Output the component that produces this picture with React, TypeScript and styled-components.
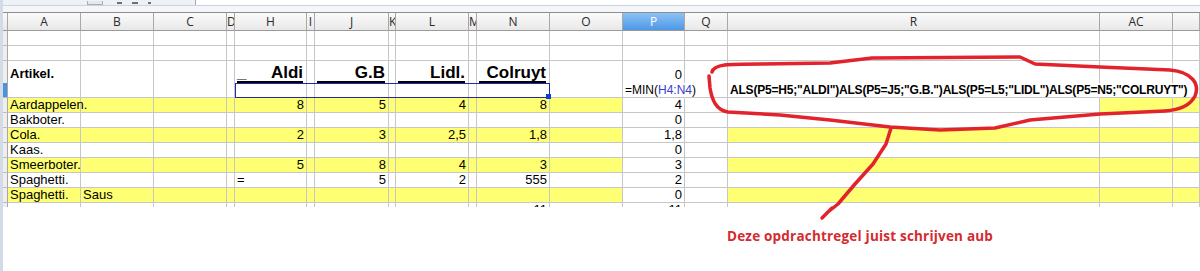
import React from 'react';
import styled, { createGlobalStyle } from 'styled-components';

const GlobalStyle = createGlobalStyle`
    html, body {
        margin: 0;
        padding: 0;
        background: #ffffff;
    }
    body {
        font-family: "Liberation Sans", Arial, sans-serif;
        color: #000;
    }
`;

const TEMPLATE = '5px 73px 73px 73px 8px 72px 8px 74px 7px 73px 8px 73px 73px 62px 43px 372px 73px 1fr';
const LETTERS = ['', 'A', 'B', 'C', 'D', 'H', 'I', 'J', 'K', 'L', 'M', 'N', 'O', 'P', 'Q', 'R', 'AC', ''];

const Page = styled.div`
    position: relative;
    display: flex;
    width: 1200px;
    height: 271px;
    overflow: hidden;
`;

const Rail = styled.div`
    width: 3px;
    background: #d3dbe7;
`;

const Main = styled.div`
    flex: 1;
    display: flex;
    flex-direction: column;
`;

const Toolbar = styled.div`
    height: 5px;
    display: flex;
    align-items: flex-end;
    background: #eef1f5;
`;

const ToolBox = styled.div`
    margin-left: 84px;
    width: 16px;
    height: 4px;
    box-sizing: border-box;
    border: 1px solid #a7afbb;
    border-top: none;
    background: #e6e8eb;
`;

const ToolMarks = styled.div`
    display: flex;
    gap: 10px;
    margin-left: 14px;
    width: 78px;
    height: 3px;
    align-items: flex-start;
`;

const Mark = styled.span<{ $w: number }>`
    width: ${p => p.$w}px;
    height: 2px;
    background: #6b717a;
`;

const InputField = styled.div`
    flex: 1;
    height: 5px;
    box-sizing: border-box;
    border-left: 1px solid #9ea7b4;
    background: #ffffff;
`;

const Band = styled.div`
    height: 7px;
    box-sizing: border-box;
    border-top: 1px solid #c9d3e1;
    background: #f4f6f9;
`;

const HeaderRow = styled.div`
    display: grid;
    grid-template-columns: ${TEMPLATE};
    height: 19px;
    box-sizing: border-box;
    border-top: 1px solid #8e8e8e;
`;

const ColHead = styled.div<{ $active?: boolean }>`
    box-sizing: border-box;
    height: 18px;
    overflow: hidden;
    border-right: 1px solid #a8a8a8;
    border-bottom: 1px solid #9a9a9a;
    background: ${p => p.$active
        ? 'linear-gradient(#8cc2f5, #4d98e6)'
        : 'linear-gradient(#fbfbfb, #e8e8e8)'};
    color: ${p => p.$active ? '#ffffff' : '#2b2b2b'};
    font-family: "Open Sans", "Noto Sans", sans-serif;
    font-size: 12px;
    line-height: 17px;
    text-align: center;
`;

const Row = styled.div<{ $h: number }>`
    position: relative;
    display: grid;
    grid-template-columns: ${TEMPLATE};
    height: ${p => p.$h}px;
`;

const RowHead = styled.div<{ $active?: boolean }>`
    box-sizing: border-box;
    border-right: 1px solid #a8a8a8;
    border-bottom: 1px solid #bdbdbd;
    background: ${p => p.$active ? '#4b93df' : '#eeeeee'};
`;

const Cell = styled.div<{ $fill?: boolean; $right?: boolean; $open?: boolean; $noLine?: boolean; $pad?: number }>`
    position: relative;
    z-index: ${p => p.$open ? 1 : 0};
    box-sizing: border-box;
    border-right: 1px solid ${p => p.$noLine ? 'transparent' : '#c6c6c6'};
    border-bottom: 1px solid #c6c6c6;
    background: ${p => p.$fill ? '#ffff73' : '#ffffff'};
    padding: ${p => p.$pad ?? 0}px 2px 0 2px;
    font-size: 13px;
    line-height: 14px;
    white-space: nowrap;
    text-align: ${p => p.$right ? 'right' : 'left'};
`;

const Bold = styled.span`
    font-weight: bold;
`;

const Heading = styled.span`
    display: flex;
    justify-content: space-between;
    font-size: 17px;
    font-weight: bold;
    line-height: 17px;
    border-bottom: 2px solid #000;
    margin: 0 1px 0 0;
`;

const MinFormula = styled.span`
    font-size: 12px;
`;

const Ref = styled.span`
    color: #3a3ad0;
`;

const IfFormula = styled.span`
    font-size: 12px;
    font-weight: bold;
    letter-spacing: -0.2px;
`;

const Selection = styled.div`
    position: absolute;
    left: 232px;
    top: 0;
    width: 315px;
    height: 15px;
    box-sizing: border-box;
    border: 1px solid #2228a8;
    pointer-events: none;
    z-index: 2;
`;

const FillHandle = styled.div`
    position: absolute;
    right: -2px;
    bottom: -2px;
    width: 5px;
    height: 5px;
    background: #0d3fd6;
`;

const Stub = styled.div`
    height: 4px;
    overflow: hidden;
`;

const Note = styled.div`
    margin-top: 21px;
    padding-left: 724px;
    font-family: "Open Sans", "Noto Sans", sans-serif;
    font-size: 13.5px;
    font-weight: bold;
    letter-spacing: 0.2px;
    line-height: 17px;
    color: #d42a30;
`;

const Ink = styled.svg`
    position: absolute;
    left: 0;
    top: 0;
    pointer-events: none;
    z-index: 5;
`;

type CellData = { v: React.ReactNode; right?: boolean; open?: boolean; noLine?: boolean; pad?: number };

type RowData = {
    h: number;
    yellow?: boolean;
    whiteR?: boolean;
    active?: boolean;
    cells: { [col: number]: CellData };
};

const rows: RowData[] = [
    { h: 15, cells: {} },
    { h: 15, cells: {} },
    {
        h: 22,
        cells: {
            1: { v: <Bold>Artikel.</Bold>, pad: 6 },
            5: { v: <Heading><span>_</span><span>Aldi</span></Heading>, pad: 3 },
            7: { v: <Heading><span /><span>G.B</span></Heading>, pad: 3 },
            9: { v: <Heading><span /><span>Lidl.</span></Heading>, pad: 3 },
            11: { v: <Heading><span /><span>Colruyt</span></Heading>, pad: 3 },
            13: { v: '0', right: true, pad: 7 },
        },
    },
    {
        h: 15,
        active: true,
        cells: {
            13: { v: <MinFormula>=MIN(<Ref>H4:N4</Ref>)</MinFormula>, open: true, noLine: true },
            15: { v: <IfFormula>ALS(P5=H5;"ALDI")ALS(P5=J5;"G.B.")ALS(P5=L5;"LIDL")ALS(P5=N5;"COLRUYT")</IfFormula>, open: true, noLine: true },
            16: { v: '', noLine: true },
        },
    },
    { h: 15, yellow: true, whiteR: true, cells: { 1: { v: 'Aardappelen.', open: true }, 5: { v: '8', right: true }, 7: { v: '5', right: true }, 9: { v: '4', right: true }, 11: { v: '8', right: true }, 13: { v: '4', right: true } } },
    { h: 15, cells: { 1: { v: 'Bakboter.' }, 13: { v: '0', right: true } } },
    { h: 15, yellow: true, cells: { 1: { v: 'Cola.' }, 5: { v: '2', right: true }, 7: { v: '3', right: true }, 9: { v: '2,5', right: true }, 11: { v: '1,8', right: true }, 13: { v: '1,8', right: true } } },
    { h: 15, cells: { 1: { v: 'Kaas.' }, 13: { v: '0', right: true } } },
    { h: 15, yellow: true, cells: { 1: { v: 'Smeerboter.' }, 5: { v: '5', right: true }, 7: { v: '8', right: true }, 9: { v: '4', right: true }, 11: { v: '3', right: true }, 13: { v: '3', right: true } } },
    { h: 15, cells: { 1: { v: 'Spaghetti.' }, 5: { v: '=' }, 7: { v: '5', right: true }, 9: { v: '2', right: true }, 11: { v: '555', right: true }, 13: { v: '2', right: true } } },
    { h: 15, yellow: true, cells: { 1: { v: 'Spaghetti.' }, 2: { v: 'Saus' }, 13: { v: '0', right: true } } },
];

const isYellow = (row: RowData, col: number) => {
    if (!row.yellow) return false;
    if (col === 13 || col === 14) return false;
    if (col === 15 && row.whiteR) return false;
    return true;
};

const SheetRow = ({ row, selected }: { row: RowData; selected?: boolean }) => (
    <Row $h={row.h}>
        <RowHead $active={row.active} />
        {LETTERS.slice(1).map((_, i) => {
            const col = i + 1;
            const c = row.cells[col];
            return (
                <Cell
                    key={col}
                    $fill={isYellow(row, col)}
                    $right={c?.right}
                    $open={c?.open}
                    $noLine={c?.noLine}
                    $pad={c?.pad}
                >
                    {c?.v}
                </Cell>
            );
        })}
        {selected && <Selection><FillHandle /></Selection>}
    </Row>
);

const Annotation = () => (
    <Ink width="1200" height="271" viewBox="0 0 1200 271">
        <g fill="none" stroke="#e3232b" strokeWidth="3.5" strokeLinecap="round" strokeLinejoin="round">
            <path d="M712 72 C714 64 728 64 760 64 L830 63 L872 58 L1020 57 L1035 64 L1100 67 L1170 70 C1192 72 1200 84 1195 96 C1190 106 1180 110 1165 111 L1100 114 L1030 120 L995 128 L940 130 L890 127 L830 120 L780 115 L728 112 C716 110 712 100 710 88 L709 76" />
            <path d="M891 128 L886 144 L873 164 L855 184 L838 204 L828 212 M832 208 L822 218" />
        </g>
    </Ink>
);

export default function App() {
    return (
        <>
            <GlobalStyle />
            <Page>
                <Rail />
                <Main>
                    <Toolbar>
                        <ToolBox />
                        <ToolMarks>
                            <Mark $w={5} />
                            <Mark $w={6} />
                            <Mark $w={3} />
                        </ToolMarks>
                        <InputField />
                    </Toolbar>
                    <Band />
                    <HeaderRow>
                        {LETTERS.map((l, i) => (
                            <ColHead key={i} $active={l === 'P'}>{l}</ColHead>
                        ))}
                    </HeaderRow>
                    {rows.map((r, i) => (
                        <SheetRow key={i} row={r} selected={i === 3} />
                    ))}
                    <Stub>
                        <SheetRow row={{ h: 15, cells: { 11: { v: '11', right: true }, 13: { v: '11', right: true } } }} />
                    </Stub>
                    <Note>Deze opdrachtregel juist schrijven aub</Note>
                </Main>
                <Annotation />
            </Page>
        </>
    );
}
